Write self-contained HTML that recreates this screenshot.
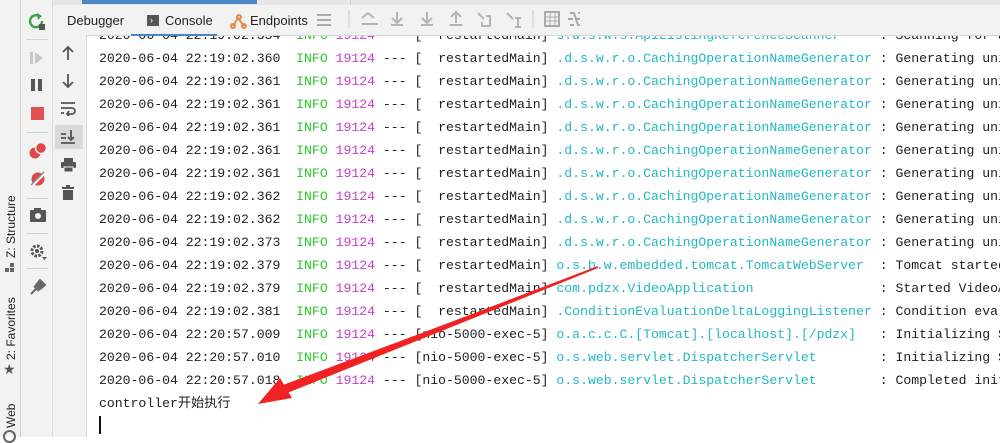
<!DOCTYPE html>
<html><head><meta charset="utf-8"><style>
*{margin:0;padding:0;box-sizing:border-box}
body{width:1000px;height:437px;overflow:hidden;background:#fff;position:relative;font-family:"Liberation Sans",sans-serif}
.strip{position:absolute;left:0;top:0;width:21px;height:437px;background:#f2f2f2;border-right:1px solid #d0d0d0}
.col1{position:absolute;left:21px;top:0;width:32px;height:437px;background:#f2f2f2;border-right:1px solid #dadada}
.col2{position:absolute;left:53px;top:35px;width:34px;height:402px;background:#f2f2f2;border-right:1px solid #dadada}
.tb{position:absolute;left:53px;top:0;width:947px;height:36px;background:#f2f2f2;border-bottom:1px solid #d6d6d6}
.topbar{position:absolute;left:53px;top:0;width:947px;height:5px;background:#e6e6e6}
.vl{position:absolute;transform:rotate(-90deg);transform-origin:left top;font-size:12px;color:#222;white-space:nowrap}
.wrap{position:absolute;left:88px;top:36px;width:912px;height:401px;overflow:hidden}
.log{position:absolute;left:11px;font-family:"Liberation Mono",monospace;font-size:13.15px;color:#1e1e1e;white-space:pre;line-height:23px}
.g{color:#2dc82d}.m{color:#c83cc8}.c{color:#22b8c0}
.ic{position:absolute}
</style></head><body>
<div class="strip"></div>
<div class="col1"></div>
<div class="tb"></div>
<div class="topbar"></div>
<div style="position:absolute;left:82px;top:0;width:175px;height:4px;background:#4a86c8"></div>
<div style="position:absolute;left:350px;top:0;width:1px;height:5px;background:#ccc"></div>
<div class="col2"></div>
<div style="position:absolute;left:55px;top:125px;width:28px;height:24px;background:#d9d9d9"></div>

<div style="position:absolute;left:67px;top:13px;font-size:13px;color:#222">Debugger</div>
<div style="position:absolute;left:147px;top:15px;width:12px;height:11px;background:#555"></div>
<div style="position:absolute;left:150px;top:15px;font-size:9px;color:#fff">›</div>
<div style="position:absolute;left:165px;top:13px;font-size:13px;color:#222">Console</div>
<div style="position:absolute;left:131px;top:34px;width:86px;height:2px;background:#4a86c8"></div>
<svg class="ic" style="left:230px;top:13px" width="18" height="16"><g stroke="#e8874a" stroke-width="2" fill="none"><path d="M3 13 L8 5 L14 13"/><circle cx="3" cy="13" r="2"/><circle cx="14" cy="13" r="2"/><circle cx="9" cy="4" r="2"/></g></svg>
<div style="position:absolute;left:250px;top:13px;font-size:13px;color:#222">Endpoints</div>

<svg style="position:absolute;left:310px;top:8px" width="270" height="22" fill="none" stroke="#b4b4b4" stroke-width="2">
<path d="M7 7h14M7 12h14M7 17h14" stroke="#aaa"/>
<path d="M39 2v18" stroke="#ccc" stroke-width="1"/>
<path d="M52 10l6-5 6 5M52 16h16"/>
<path d="M87 4v10M82 10l5 5 5-5M81 17h12"/>
<path d="M117 4v10M112 10l5 5 5-5M111 17h12"/>
<path d="M146 15V5M141 9l5-5 5 5M140 17h12"/>
<path d="M168 5l6 6M176 8h4v10h-8v-4"/>
<path d="M197 5l6 6M208 10v9M205 10h6M205 19h6"/>
<path d="M223 2v18" stroke="#ccc" stroke-width="1"/>
<rect x="235" y="4" width="14" height="14" stroke="#aaa"/><path d="M235 9h14M235 13h14M240 4v14M245 4v14" stroke="#aaa" stroke-width="1"/>
<path d="M260 5h4l4 12h4M260 17h4M268 5h4M258 11h5M266 11h5" stroke="#aaa"/>
</svg>

<svg class="ic" style="left:27px;top:12px" width="20" height="20" fill="none"><path d="M15 9a6 6 0 1 1-3-5" stroke="#3aa04a" stroke-width="2.4"/><path d="M10 1l5 3-4 4z" fill="#3aa04a"/><rect x="12" y="12" width="6" height="6" fill="#555"/></svg>
<div style="position:absolute;left:26px;top:39px;width:22px;height:1px;background:#d0d0d0"></div>
<svg class="ic" style="left:29px;top:50px" width="16" height="16"><rect x="1" y="2" width="3" height="12" fill="#c8c8c8"/><path d="M6 2l8 6-8 6z" fill="#c8c8c8"/></svg>
<svg class="ic" style="left:31px;top:78px" width="12" height="14"><rect x="0" y="1" width="4" height="12" fill="#555"/><rect x="7" y="1" width="4" height="12" fill="#555"/></svg>
<div class="ic" style="left:31px;top:107px;width:13px;height:13px;background:#e05252"></div>
<div style="position:absolute;left:26px;top:132px;width:22px;height:1px;background:#d0d0d0"></div>
<svg class="ic" style="left:28px;top:141px" width="20" height="20"><circle cx="7" cy="12" r="5.5" fill="#e04848"/><circle cx="13" cy="7" r="5.5" fill="#e04848" stroke="#f2f2f2" stroke-width="1.5"/></svg>
<svg class="ic" style="left:29px;top:170px" width="18" height="18"><circle cx="9" cy="9" r="6.5" fill="#e04848"/><path d="M3 16L16 3" stroke="#f2f2f2" stroke-width="2.5"/><path d="M2 15L15 2" stroke="#888" stroke-width="1.3"/></svg>
<div style="position:absolute;left:26px;top:198px;width:22px;height:1px;background:#d0d0d0"></div>
<svg class="ic" style="left:29px;top:207px" width="18" height="16"><rect x="1" y="3" width="16" height="12" rx="1" fill="#555"/><rect x="5" y="1" width="7" height="3" fill="#555"/><circle cx="9" cy="9" r="3" fill="#f2f2f2"/></svg>
<div style="position:absolute;left:26px;top:233px;width:22px;height:1px;background:#d0d0d0"></div>
<svg class="ic" style="left:28px;top:242px" width="20" height="20"><circle cx="9" cy="9" r="5" fill="none" stroke="#555" stroke-width="3" stroke-dasharray="2.5 1.4"/><circle cx="9" cy="9" r="2" fill="#555"/><path d="M14 15h5l-2.5 3z" fill="#555"/></svg>
<div style="position:absolute;left:26px;top:268px;width:22px;height:1px;background:#d0d0d0"></div>
<svg class="ic" style="left:29px;top:278px" width="18" height="18"><path d="M2 16l6-6" stroke="#666" stroke-width="2"/><path d="M7 7l4-5 5 5-5 4z M5 8l5 5" fill="#666" stroke="#666" stroke-width="2"/></svg>

<svg class="ic" style="left:61px;top:45px" width="14" height="16" fill="none" stroke="#555" stroke-width="1.8"><path d="M7 15V2M2 7l5-5 5 5"/></svg>
<svg class="ic" style="left:61px;top:73px" width="14" height="16" fill="none" stroke="#555" stroke-width="1.8"><path d="M7 1v13M2 9l5 5 5-5"/></svg>
<svg class="ic" style="left:60px;top:100px" width="16" height="16" fill="none" stroke="#555" stroke-width="1.8"><path d="M1 3h14M1 8h11a3 3 0 0 1 0 6H8M1 13h3M9 11l-2 3 2 2"/></svg>
<svg class="ic" style="left:60px;top:129px" width="16" height="16" fill="none" stroke="#555" stroke-width="1.8"><path d="M1 5h5M1 9h5M1 14h14M11 1v10M8 8l3 3 3-3"/></svg>
<svg class="ic" style="left:60px;top:157px" width="17" height="16"><rect x="4" y="1" width="9" height="4" fill="#555"/><rect x="1" y="5" width="15" height="6" rx="1" fill="#555"/><rect x="4" y="10" width="9" height="5" fill="#555" stroke="#f2f2f2" stroke-width="1"/></svg>
<svg class="ic" style="left:61px;top:185px" width="14" height="16"><rect x="1" y="2" width="12" height="2" fill="#555"/><rect x="5" y="0" width="4" height="2" fill="#555"/><rect x="2" y="5" width="10" height="10" fill="#555"/></svg>

<div class="vl" style="left:4px;top:258px">Z: Structure</div>
<svg class="ic" style="left:4px;top:262px" width="12" height="12"><rect x="6" y="1" width="4" height="4" fill="#666"/><rect x="1" y="6" width="4" height="4" fill="#666"/><rect x="6" y="6" width="4" height="4" fill="#666"/></svg>
<div class="vl" style="left:4px;top:360px">2: Favorites</div>
<div style="position:absolute;left:3px;top:361px;font-size:14px;color:#555">★</div>
<div class="vl" style="left:4px;top:428px">Web</div>
<div style="position:absolute;left:3px;top:430px;width:13px;height:13px;border-radius:50%;border:2px solid #666"></div>

<div class="wrap"><div class="log" style="top:-12px">2020-06-04 22:19:02.354  <span class="g">INFO</span> <span class="m">19124</span> --- [  restartedMain] <span class="c">s.d.s.w.s.ApiListingReferenceScanner    </span> : Scanning for api
2020-06-04 22:19:02.360  <span class="g">INFO</span> <span class="m">19124</span> --- [  restartedMain] <span class="c">.d.s.w.r.o.CachingOperationNameGenerator</span> : Generating unique
2020-06-04 22:19:02.361  <span class="g">INFO</span> <span class="m">19124</span> --- [  restartedMain] <span class="c">.d.s.w.r.o.CachingOperationNameGenerator</span> : Generating unique
2020-06-04 22:19:02.361  <span class="g">INFO</span> <span class="m">19124</span> --- [  restartedMain] <span class="c">.d.s.w.r.o.CachingOperationNameGenerator</span> : Generating unique
2020-06-04 22:19:02.361  <span class="g">INFO</span> <span class="m">19124</span> --- [  restartedMain] <span class="c">.d.s.w.r.o.CachingOperationNameGenerator</span> : Generating unique
2020-06-04 22:19:02.361  <span class="g">INFO</span> <span class="m">19124</span> --- [  restartedMain] <span class="c">.d.s.w.r.o.CachingOperationNameGenerator</span> : Generating unique
2020-06-04 22:19:02.361  <span class="g">INFO</span> <span class="m">19124</span> --- [  restartedMain] <span class="c">.d.s.w.r.o.CachingOperationNameGenerator</span> : Generating unique
2020-06-04 22:19:02.362  <span class="g">INFO</span> <span class="m">19124</span> --- [  restartedMain] <span class="c">.d.s.w.r.o.CachingOperationNameGenerator</span> : Generating unique
2020-06-04 22:19:02.362  <span class="g">INFO</span> <span class="m">19124</span> --- [  restartedMain] <span class="c">.d.s.w.r.o.CachingOperationNameGenerator</span> : Generating unique
2020-06-04 22:19:02.373  <span class="g">INFO</span> <span class="m">19124</span> --- [  restartedMain] <span class="c">.d.s.w.r.o.CachingOperationNameGenerator</span> : Generating unique
2020-06-04 22:19:02.379  <span class="g">INFO</span> <span class="m">19124</span> --- [  restartedMain] <span class="c">o.s.b.w.embedded.tomcat.TomcatWebServer </span> : Tomcat started
2020-06-04 22:19:02.379  <span class="g">INFO</span> <span class="m">19124</span> --- [  restartedMain] <span class="c">com.pdzx.VideoApplication               </span> : Started VideoApp
2020-06-04 22:19:02.381  <span class="g">INFO</span> <span class="m">19124</span> --- [  restartedMain] <span class="c">.ConditionEvaluationDeltaLoggingListener</span> : Condition evalu
2020-06-04 22:20:57.009  <span class="g">INFO</span> <span class="m">19124</span> --- [nio-5000-exec-5] <span class="c">o.a.c.c.C.[Tomcat].[localhost].[/pdzx]  </span> : Initializing Sp
2020-06-04 22:20:57.010  <span class="g">INFO</span> <span class="m">19124</span> --- [nio-5000-exec-5] <span class="c">o.s.web.servlet.DispatcherServlet       </span> : Initializing Sp
2020-06-04 22:20:57.018  <span class="g">INFO</span> <span class="m">19124</span> --- [nio-5000-exec-5] <span class="c">o.s.web.servlet.DispatcherServlet       </span> : Completed initi
<span style="font-family:'Liberation Mono','Noto Sans CJK SC',monospace">controller开始执行</span></div></div>
<div style="position:absolute;left:99px;top:416px;width:2px;height:18px;background:#111"></div>

<svg style="position:absolute;left:0;top:0" width="1000" height="437">
<path d="M598 267 L285 390 L283 385 Z" fill="#f02222"/>
<path d="M598 267 L286 386 L287 392 Z" fill="#f02222" stroke="#f02222" stroke-width="2"/>
<path d="M258 404 L280 378 L292 398 Z" fill="#f02222"/>
</svg>
</body></html>
